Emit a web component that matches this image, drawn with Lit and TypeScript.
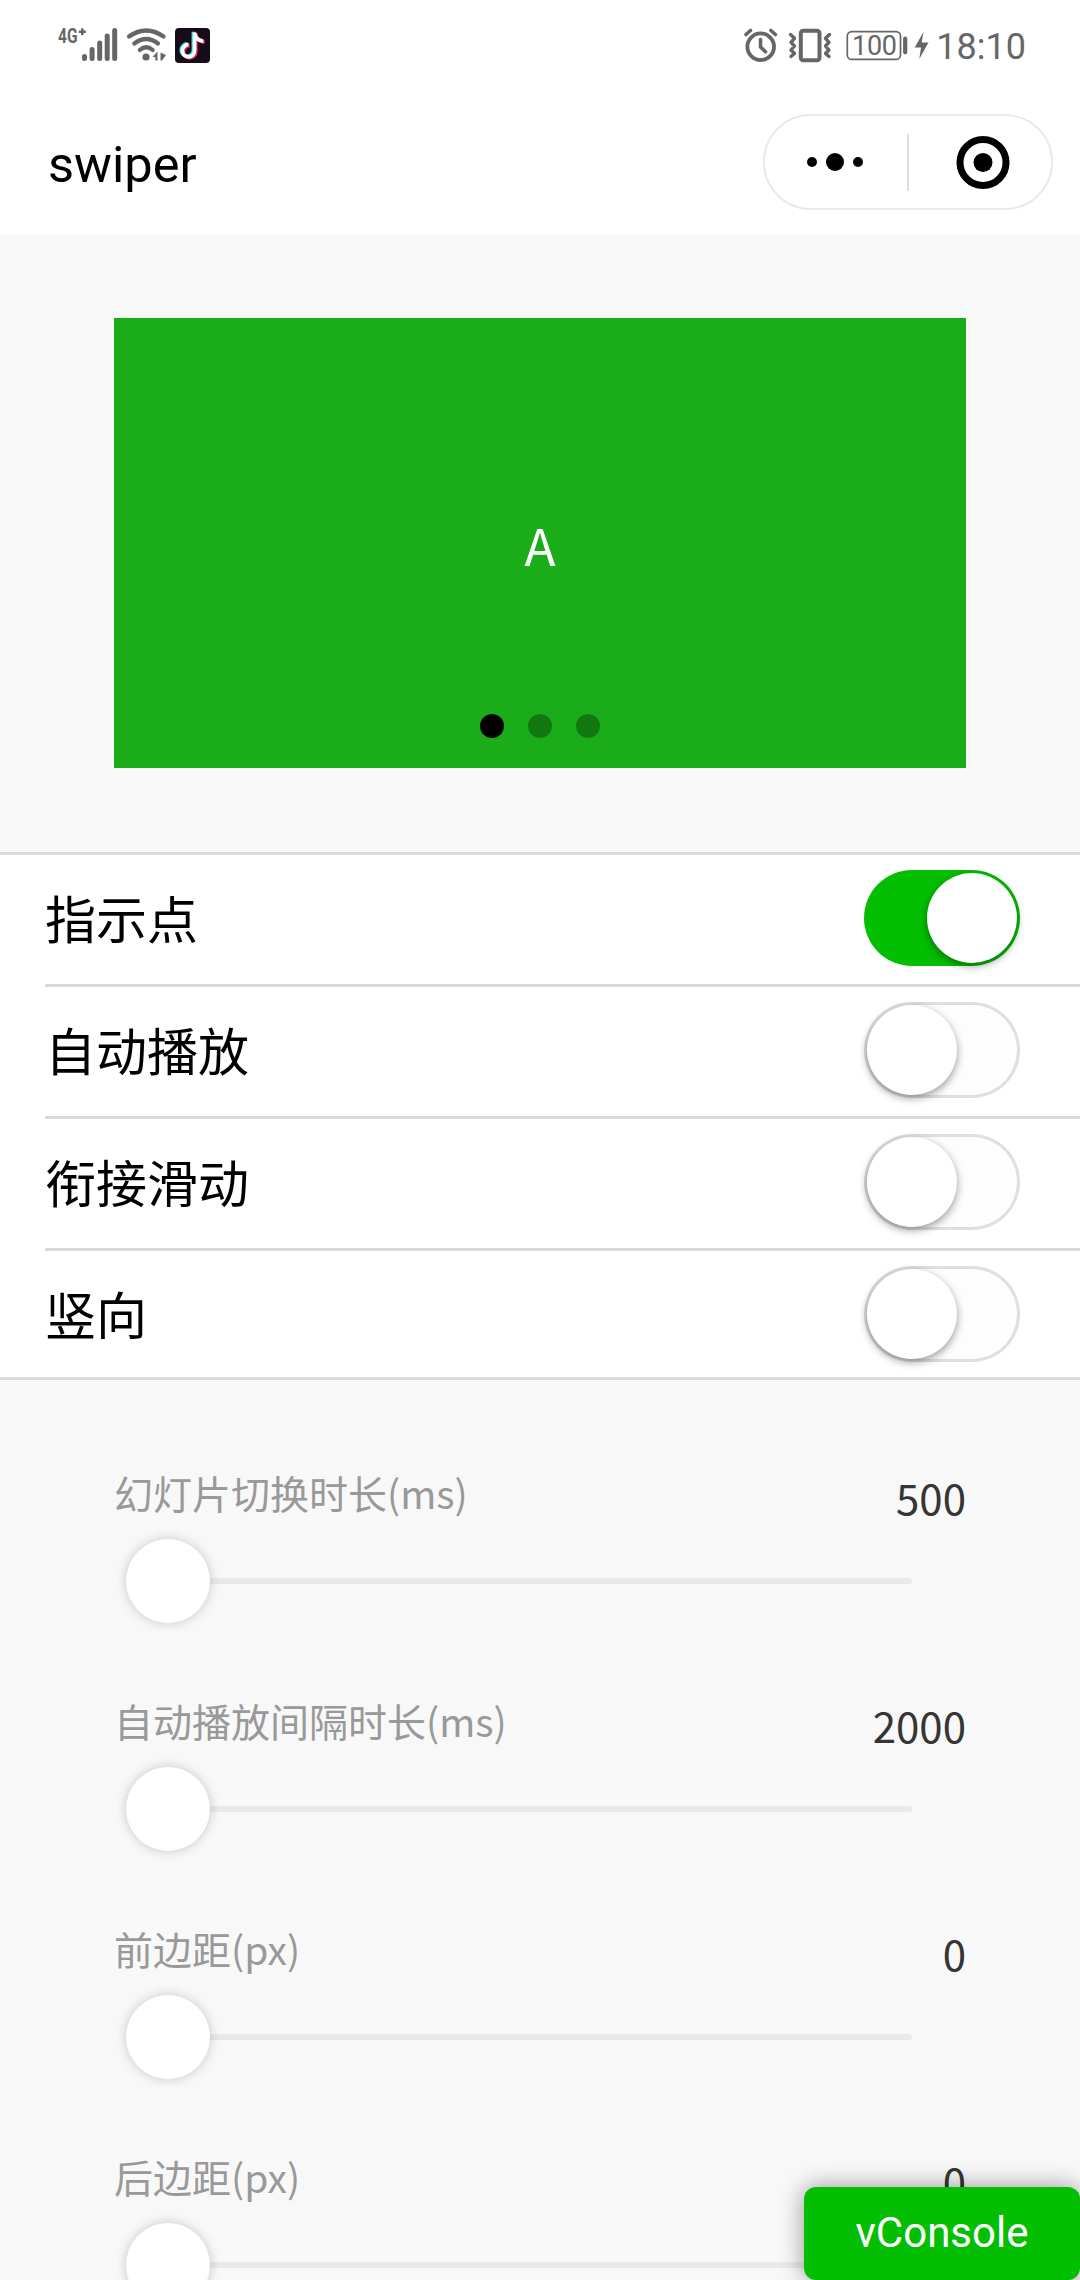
import { LitElement, html, css, svg } from "lit";
import { customElement, property } from "lit/decorators.js";

@customElement("status-bar")
class StatusBar extends LitElement {
  static styles = css`
    :host { display: flex; justify-content: space-between; height: 90px; padding: 0 54px 0 54px; box-sizing: border-box; font-family: Roboto, sans-serif; color: #666; }
    svg { display: block; flex: none; }
    .group { display: flex; }
    .clock { font-size: 36px; line-height: 44px; padding-top: 25px; white-space: nowrap; }
    .net { font-family: Roboto, sans-serif; font-size: 20.5px; font-weight: 700; }
    .level { font-size: 27px; }
  `;
  render() {
    return html`
      <div class="group">
        <svg width="160" height="90" viewBox="54 0 160 90" fill="none">
          <text class="net" x="58" y="42.500" textLength="19.500" lengthAdjust="spacingAndGlyphs" fill="#666">4G</text>
          <path d="M78.800 31.700h7M82.300 28.200v7" stroke="#666" stroke-width="2.400"/>
          <g stroke="#666" stroke-width="5" stroke-linecap="round">
            <path d="M84.500 56.500v2M92.100 49.500v9M99.700 43v15.500M107.200 36v22.500M114.700 30.500v28"/>
          </g>
          <g stroke="#666" stroke-width="4.200" stroke-linecap="round">
            <path d="M129 36.500Q146.200 24.500 163.500 36.500M134.300 43.500Q146.200 34.500 158 43.500M139.800 50Q146.200 44.500 152.700 50"/>
          </g>
          <circle cx="146" cy="57" r="3.600" fill="#666"/>
          <path d="M152.500 57l5-5.500v9h-2.200v-3.500zM160.500 52.500l5.500 2.500-4 5.500h-1.500z" fill="#666"/>
          <rect x="175" y="28" width="35" height="35" rx="4" fill="#170b1a"/>
          ${[["#25e8e2", -1.2, -0.8], ["#f4204e", 1.2, 0.9], ["#fff", 0, 0]].map(
            ([c, x, y]) => svg`<path transform="translate(${x} ${y})" d="M194.600 32.500v18.300a6.100 6.100 0 1 1-6.100-6.100M194.600 32.800c.5 5 4 8.200 8.800 8.500" stroke="${c}" stroke-width="3.700"/>`
          )}
        </svg>
      </div>
      <div class="group">
        <svg width="194" height="90" viewBox="742 0 194 90" fill="none" stroke="#666" stroke-linecap="round" stroke-linejoin="round">
          <circle cx="760.700" cy="46.700" r="13.300" stroke-width="3.800"/>
          <path d="M746 34.500l4.500-4M775.400 34.500l-4.500-4" stroke-width="3.600"/>
          <path d="M760.500 39.500v7.500l5 4.800" stroke-width="3.600"/>
          <rect x="800.800" y="30.800" width="18.700" height="29.400" rx="2.500" stroke-width="4"/>
          <path d="M790.500 34.500l4 3.800-3.500 4 3.500 3.700-3.500 4 3.500 3.500-3.500 3M829.500 34.500l-4 3.800 3.500 4-3.500 3.700 3.500 4-3.500 3.500 3.500 3" stroke-width="3.400"/>
          <rect x="847.300" y="31.600" width="53.200" height="27.800" rx="4.500" stroke-width="1.700"/>
          <path d="M905.200 38.700v13.600" stroke-width="4.200"/>
          <path d="M923.500 32l-8.800 15.500h6.300l-1.700 11.500 9.200-16.500h-6.800z" fill="#666" stroke="none"/>
          <text class="level" x="852" y="55.300" textLength="45" fill="#666" stroke="none">100</text>
        </svg>
        <div class="clock">18:10</div>
      </div>`;
  }
}

@customElement("nav-bar")
class NavBar extends LitElement {
  static styles = css`
    :host { display: flex; justify-content: space-between; align-items: center; height: 144px; padding: 0 27px 0 48px; box-sizing: border-box; background: #fff; }
    .title { font: 50.5px/60px Roboto, sans-serif; color: #000; padding-top: 6px; }
    .capsule { display: flex; align-items: center; width: 290px; height: 96px; border: 2px solid #e9e9e9; border-radius: 48px; box-sizing: border-box; }
    .half { flex: none; width: 142px; box-sizing: border-box; display: flex; align-items: center; justify-content: center; }
    .more { padding-right: 2px; }
    .close { padding-left: 5px; }
    .sep { flex: none; width: 2px; height: 57px; background: #dedede; }
    svg { display: block; }
  `;
  render() {
    return html`
      <div class="title">swiper</div>
      <div class="capsule">
        <div class="half more"><svg width="58" height="20" viewBox="0 0 58 20"><circle cx="6" cy="10" r="5"/><circle cx="29" cy="10" r="9"/><circle cx="52" cy="10" r="5"/></svg></div>
        <div class="sep"></div>
        <div class="half close"><svg width="54" height="54" viewBox="0 0 54 54"><circle cx="27" cy="27.500" r="23" fill="none" stroke="#000" stroke-width="7"/><circle cx="27" cy="27.500" r="9.500"/></svg></div>
      </div>`;
  }
}

@customElement("toggle-row")
class ToggleRow extends LitElement {
  @property() label = "";
  @property({ type: Boolean, reflect: true }) on = false;
  static styles = css`
    :host { display: flex; justify-content: space-between; height: 132px; margin-left: 45px; padding-right: 60px; border-top: 3px solid #d9d9d9; box-sizing: border-box; }
    .label { font-size: 51px; line-height: 76px; padding-top: 24px; color: #000; }
    .switch { display: flex; width: 156px; height: 96px; margin-top: 15px; padding: 3px; box-sizing: border-box; border-radius: 48px; background: #fdfdfd; box-shadow: inset 0 0 0 3px #dfdfdf; }
    .knob { width: 90px; height: 90px; border-radius: 50%; background: #fff; box-shadow: 0 3px 9px rgba(0, 0, 0, 0.4); }
    :host([on]) .switch { background: #04be02; box-shadow: none; justify-content: flex-end; }
  `;
  render() {
    return html`<div class="label">${this.label}</div><div class="switch"><div class="knob"></div></div>`;
  }
}

@customElement("slider-row")
class SliderRow extends LitElement {
  @property() label = "";
  @property() value = "";
  static styles = css`
    :host { display: block; height: 228px; }
    .head { display: flex; justify-content: space-between; height: 84px; }
    .label { font-size: 39px; line-height: 58px; padding-top: 8px; color: #999; }
    .value { font-size: 42px; line-height: 62px; padding-top: 11px; color: #353535; }
    .slider { display: flex; align-items: center; height: 84px; margin: 0 54px 0 12px; }
    .knob { flex: none; width: 84px; height: 84px; border-radius: 50%; background: #fff; box-shadow: 0 0 12px rgba(0, 0, 0, 0.2); z-index: 1; }
    .track { flex: 1; height: 6px; margin-left: -42px; border-radius: 3px; background: #e9e9e9; }
  `;
  render() {
    return html`
      <div class="head"><div class="label">${this.label}</div><div class="value">${this.value}</div></div>
      <div class="slider"><div class="knob"></div><div class="track"></div></div>`;
  }
}

@customElement("app-root")
class AppRoot extends LitElement {
  static styles = css`
    :host { display: block; position: relative; width: 1080px; height: 2280px; overflow: hidden; background: #f8f8f8; font-family: "Noto Sans CJK SC", sans-serif; }
    status-bar { background: #fff; }
    .swiper { display: flex; flex-direction: column; justify-content: space-between; align-items: center; height: 450px; margin: 84px 114px; padding: 188px 0 30px; box-sizing: border-box; background: #1aad19; }
    .slide { font-size: 51px; line-height: 76px; color: #fff; }
    .dots { display: flex; gap: 24px; }
    .dot { width: 24px; height: 24px; border-radius: 50%; background: rgba(0, 0, 0, 0.3); }
    .dot.active { background: #000; }
    .list { background: #fff; border-bottom: 3px solid #d9d9d9; height: 528px; box-sizing: border-box; }
    .list toggle-row:first-child { margin-left: 0; padding-left: 45px; }
    .sliders { padding: 75px 114px 0; }
    .vconsole { position: absolute; right: 0; bottom: 0; width: 276px; height: 93px; border-radius: 12px; background: #04be02; box-shadow: 0 0 24px rgba(0, 0, 0, 0.4); color: #fff; font: 42px/91px Roboto, sans-serif; text-align: center; z-index: 2; }
  `;
  private toggles: [string, boolean][] = [["指示点", true], ["自动播放", false], ["衔接滑动", false], ["竖向", false]];
  private sliders = [["幻灯片切换时长(ms)", "500"], ["自动播放间隔时长(ms)", "2000"], ["前边距(px)", "0"], ["后边距(px)", "0"]];
  render() {
    return html`
      <status-bar></status-bar>
      <nav-bar></nav-bar>
      <div class="swiper">
        <div class="slide">A</div>
        <div class="dots"><div class="dot active"></div><div class="dot"></div><div class="dot"></div></div>
      </div>
      <div class="list">${this.toggles.map(([l, on]) => html`<toggle-row .label=${l} .on=${on}></toggle-row>`)}</div>
      <div class="sliders">${this.sliders.map(([l, v]) => html`<slider-row .label=${l} .value=${v}></slider-row>`)}</div>
      <div class="vconsole">vConsole</div>`;
  }
}
